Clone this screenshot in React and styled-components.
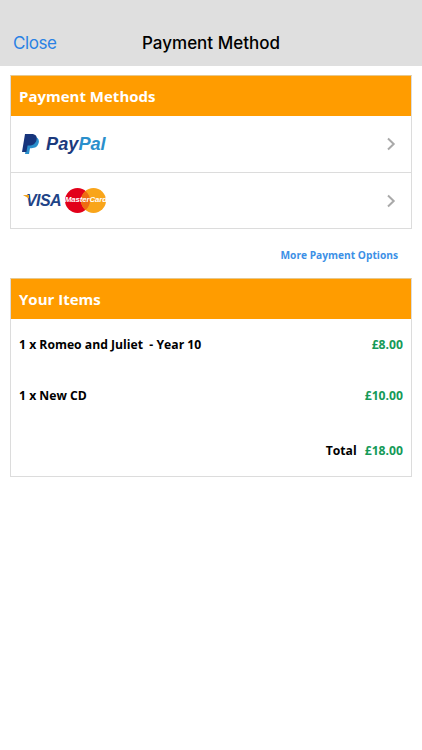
import React from "react";
import styled, { createGlobalStyle } from "styled-components";

const GlobalStyle = createGlobalStyle`
  html, body {
    margin: 0;
    padding: 0;
    background: #fff;
    font-family: "Open Sans", "Liberation Sans", sans-serif;
  }
`;

const Page = styled.div`
  width: 422px;
  height: 750px;
  overflow: hidden;
  background: #fff;
`;

const NavBar = styled.header`
  height: 66px;
  box-sizing: border-box;
  padding: 0 13px 13px;
  background: #dfdfdf;
  display: grid;
  grid-template-columns: 1fr auto 1fr;
  align-items: end;
  font-family: Inter, "Liberation Sans", sans-serif;
  font-size: 17px;
  line-height: 20px;
`;

const CloseLink = styled.a`
  color: #2a82e4;
  letter-spacing: -0.45px;
`;

const NavTitle = styled.h1`
  margin: 0;
  font-size: inherit;
  line-height: inherit;
  font-weight: 500;
  color: #000;
`;

const Content = styled.main`
  padding: 9px 10px 0;
  display: flex;
  flex-direction: column;
`;

const Card = styled.section`
  border: 1px solid #dcdcdc;
  border-top-color: #e6c88e;
  background: #fff;
`;

const CardHeader = styled.h2`
  margin: 0;
  height: 40px;
  box-sizing: border-box;
  padding: 0 8px;
  display: flex;
  align-items: center;
  background: #ff9c00;
  color: #fff;
  font-size: 15px;
  font-weight: 700;
`;

const MethodRow = styled.div`
  height: 56px;
  box-sizing: border-box;
  padding: 0 15px 0 11px;
  display: flex;
  align-items: center;
  justify-content: space-between;
  & + & {
    border-top: 1px solid #dcdcdc;
  }
`;

const PayPalLogo = styled.div`
  display: flex;
  align-items: center;
  gap: 7px;
`;

const PayPalWord = styled.span`
  font-family: "Liberation Sans", sans-serif;
  font-size: 18.2px;
  font-style: italic;
  font-weight: 700;
  color: #1c3a7d;
`;

const PalPart = styled.span`
  color: #2a8fcc;
`;

const CardsLogo = styled.div`
  display: flex;
  align-items: center;
  gap: 4px;
`;

const VisaWord = styled.span`
  position: relative;
  padding-left: 4px;
  font-family: "Liberation Sans", sans-serif;
  font-size: 16px;
  font-style: italic;
  font-weight: 700;
  letter-spacing: -0.6px;
  color: #1f4487;
  &::before {
    content: "";
    position: absolute;
    left: 0;
    top: 3px;
    width: 7px;
    height: 4px;
    background: #f0a51e;
    clip-path: polygon(0 0, 100% 0, 100% 100%);
  }
`;

const MasterBadge = styled.div`
  position: relative;
  width: 41px;
  height: 25px;
`;

const MasterLabel = styled.span`
  position: absolute;
  left: 0;
  right: 0;
  top: 6px;
  text-align: center;
  font-family: "Liberation Sans", sans-serif;
  font-size: 7.8px;
  line-height: 12px;
  font-style: italic;
  font-weight: 700;
  letter-spacing: -0.1px;
  color: #fff;
`;

const MoreRow = styled.div`
  height: 49px;
  box-sizing: border-box;
  padding: 2px 14px 0 0;
  display: flex;
  align-items: center;
  justify-content: flex-end;
`;

const MoreLink = styled.a`
  color: #3c90e6;
  font-size: 10.2px;
  font-weight: 700;
`;

const ItemRow = styled.div`
  height: ${(p) => p.$height}px;
  box-sizing: border-box;
  padding: ${(p) => p.$top}px 8px 0;
  display: flex;
  justify-content: ${(p) => (p.$end ? "flex-end" : "space-between")};
  gap: 8px;
  font-size: 12.2px;
  line-height: 18px;
  font-weight: 700;
  color: #000;
`;

const Price = styled.span`
  color: #159a58;
`;

const Chevron = () => (
  <svg width="10" height="14" viewBox="0 0 10 14" fill="none">
    <path d="M2 1.5 L7.7 7 L2 12.5" stroke="#a9a9a9" strokeWidth="2" />
  </svg>
);

const PayPalMark = () => (
  <svg width="17" height="20" viewBox="0 0 17 20">
    <path
      d="M6 3 H11.5 C15.6 3 17.6 5.2 16.7 8.8 C15.8 12.6 13 14.2 9.5 14.2 H8 L7 20 H3 Z"
      fill="#2a8fcc"
    />
    <path
      d="M3 0 H9.5 C13.6 0 15.4 2.2 14.6 5.8 C13.7 9.8 10.8 11.6 7.2 11.6 H5.6 L4.4 18 H0 Z"
      fill="#17357c"
    />
  </svg>
);

const MasterCircles = () => (
  <svg width="41" height="25" viewBox="0 0 41 25">
    <circle cx="12.5" cy="12.5" r="12.5" fill="#e2001a" />
    <circle cx="28.5" cy="12.5" r="12.5" fill="#f9a51a" />
    <path d="M20.5 2.9 A12.5 12.5 0 0 1 20.5 22.1 A12.5 12.5 0 0 1 20.5 2.9 Z" fill="#ee6b12" />
  </svg>
);

const App = () => {
  return (
    <Page>
      <GlobalStyle />
      <NavBar>
        <CloseLink>Close</CloseLink>
        <NavTitle>Payment Method</NavTitle>
      </NavBar>
      <Content>
        <Card>
          <CardHeader>Payment Methods</CardHeader>
          <MethodRow>
            <PayPalLogo>
              <PayPalMark />
              <PayPalWord>
                Pay<PalPart>Pal</PalPart>
              </PayPalWord>
            </PayPalLogo>
            <Chevron />
          </MethodRow>
          <MethodRow>
            <CardsLogo>
              <VisaWord>VISA</VisaWord>
              <MasterBadge>
                <MasterCircles />
                <MasterLabel>MasterCard</MasterLabel>
              </MasterBadge>
            </CardsLogo>
            <Chevron />
          </MethodRow>
        </Card>
        <MoreRow>
          <MoreLink>More Payment Options</MoreLink>
        </MoreRow>
        <Card>
          <CardHeader>Your Items</CardHeader>
          <ItemRow $height={51} $top={17}>
            <span>1 x Romeo and Juliet&nbsp; - Year 10</span>
            <Price>£8.00</Price>
          </ItemRow>
          <ItemRow $height={54} $top={17}>
            <span>1 x New CD</span>
            <Price>£10.00</Price>
          </ItemRow>
          <ItemRow $height={52} $top={18} $end>
            <span>Total</span>
            <Price>£18.00</Price>
          </ItemRow>
        </Card>
      </Content>
    </Page>
  );
};

export default App;
